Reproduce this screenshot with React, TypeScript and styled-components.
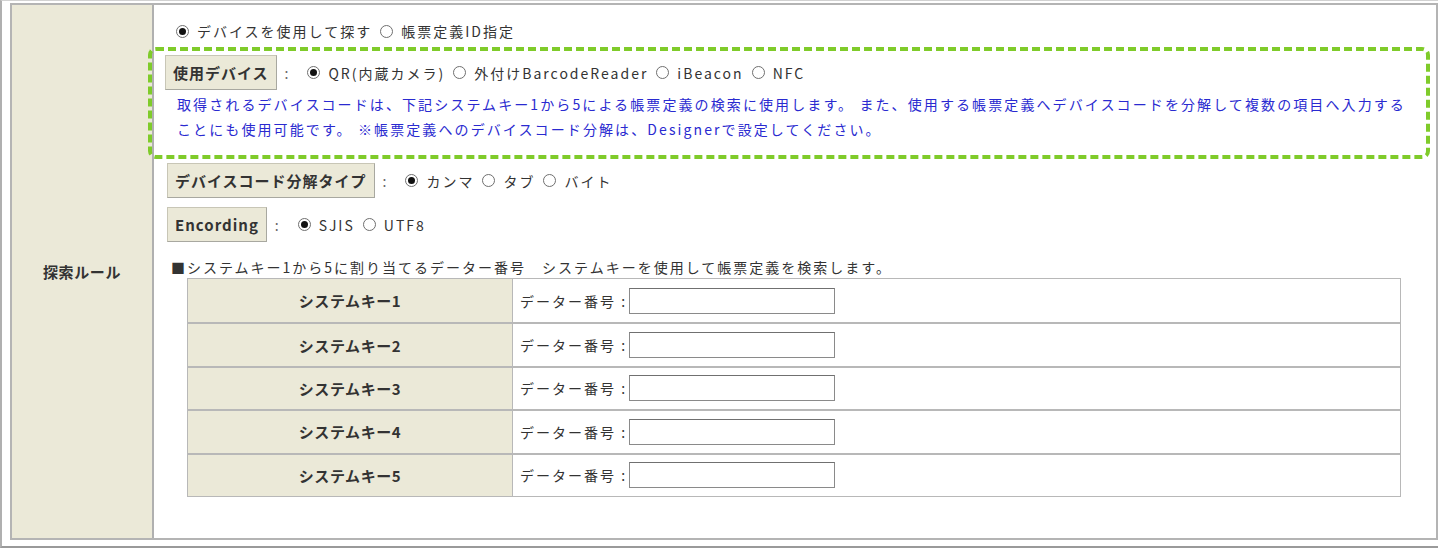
import React from "react";
import styled, { createGlobalStyle } from "styled-components";

const GlobalStyle = createGlobalStyle`
  html, body { margin: 0; padding: 0; background: #ffffff; }
  body { font-family: "Noto Sans CJK JP", "Noto Sans", sans-serif; color: #333333; }
  * { box-sizing: border-box; }
`;

const Frame = styled.div`
  width: 1438px;
  height: 548px;
  border-top: 1px solid #d2d2d2;
  border-left: 2px solid #b0b0b0;
  border-bottom: 2px solid #9a9a9a;
  padding: 2px 0 6px 8px;
  display: flex;
`;

const Table = styled.div`
  position: relative;
  flex: 1;
  display: grid;
  grid-template-columns: 142px 1fr;
  border: 2px solid #b4b4b4;
`;

const LabelCell = styled.div`
  background: #ebe9d8;
  border-right: 2px solid #b0b0b0;
  display: flex;
  align-items: center;
  justify-content: center;
  font-size: 15px;
  font-weight: 700;
  letter-spacing: 0.6px;
  color: #333;
`;

const Content = styled.div`
  display: flex;
  flex-direction: column;
  align-items: flex-start;
  padding: 16px 0 0 0;
  font-size: 14px;
  letter-spacing: 2px;
`;

const Line = styled.div<{ $indent: number; $top: number }>`
  display: flex;
  align-items: center;
  margin-left: ${(p) => p.$indent}px;
  margin-top: ${(p) => p.$top}px;
  height: 20px;
  white-space: nowrap;
`;

const OptionRow = styled.div<{ $indent: number; $top: number }>`
  display: flex;
  align-items: center;
  margin-left: ${(p) => p.$indent}px;
  margin-top: ${(p) => p.$top}px;
  white-space: nowrap;
`;

const FieldLabel = styled.div`
  height: 35px;
  padding: 0 7px;
  display: flex;
  align-items: center;
  background: #ebe9d8;
  border: 1px solid #c8c6b6;
  border-right-color: #a8a8a0;
  border-bottom-color: #a8a8a0;
  font-size: 15px;
  font-weight: 700;
  letter-spacing: 1px;
  color: #333;
`;

const Colon = styled.span`
  margin: 0 17px 0 8px;
  color: #666;
`;

const Option = styled.label`
  display: inline-flex;
  align-items: center;
  margin-right: 8px;
  color: #333;
`;

const Radio = styled.span<{ $checked?: boolean }>`
  width: 13px;
  height: 13px;
  border-radius: 50%;
  border: 1px solid #6f6f6f;
  background: #fff;
  margin-right: 8px;
  display: inline-flex;
  align-items: center;
  justify-content: center;
  flex: none;
  &::after {
    content: "";
    width: 7px;
    height: 7px;
    border-radius: 50%;
    background: ${(p) => (p.$checked ? "#111" : "transparent")};
  }
`;

const Note = styled.div`
  margin: 2px 0 0 23px;
  color: #2a2ad0;
  font-size: 14px;
  line-height: 25px;
  letter-spacing: 2.1px;
  white-space: nowrap;
`;

const Heading = styled.div`
  margin: 15px 0 0 17px;
  height: 20px;
  line-height: 20px;
  white-space: nowrap;
`;

const KeyTable = styled.div`
  margin: 1px 0 0 33px;
  width: 1214px;
  display: grid;
  grid-template-columns: 325px 1fr;
  border: 1px solid #b8b8b8;
`;

const KeyName = styled.div<{ $first: boolean }>`
  height: 43.4px;
  background: #ebe9d8;
  display: flex;
  align-items: center;
  justify-content: center;
  font-size: 15px;
  font-weight: 700;
  letter-spacing: 0.6px;
  color: #333;
  border-top: ${(p) => (p.$first ? "none" : "2px solid #b8b8b8")};
  border-right: 1px solid #b8b8b8;
`;

const KeyValue = styled.div<{ $first: boolean }>`
  height: 43.4px;
  display: flex;
  align-items: center;
  padding-left: 7px;
  border-top: ${(p) => (p.$first ? "none" : "2px solid #b8b8b8")};
`;

const TextBox = styled.input`
  width: 206px;
  height: 26px;
  margin-left: 2px;
  border: 1px solid #8a8a8a;
  border-top-color: #707070;
  background: #fff;
  font-size: 13px;
`;

const Highlight = styled.div`
  position: absolute;
  left: 136px;
  top: 42px;
  width: 1282px;
  height: 112px;
  border: 4px dashed #7fcb2a;
  border-radius: 8px;
  pointer-events: none;
`;

const keys = [1, 2, 3, 4, 5];

export default function App() {
  return (
    <>
      <GlobalStyle />
      <Frame>
        <Table>
          <LabelCell>探索ルール</LabelCell>
          <Content>
            <Line $indent={22} $top={0}>
              <Option><Radio $checked />デバイスを使用して探す</Option>
              <Option><Radio />帳票定義ID指定</Option>
            </Line>
            <OptionRow $indent={11} $top={14}>
              <FieldLabel>使用デバイス</FieldLabel>
              <Colon>:</Colon>
              <Option><Radio $checked />QR(内蔵カメラ)</Option>
              <Option><Radio />外付けBarcodeReader</Option>
              <Option><Radio />iBeacon</Option>
              <Option><Radio />NFC</Option>
            </OptionRow>
            <Note>
              取得されるデバイスコードは、下記システムキー1から5による帳票定義の検索に使用します。 また、使用する帳票定義へデバイスコードを分解して複数の項目へ入力する
              <br />
              ことにも使用可能です。 ※帳票定義へのデバイスコード分解は、Designerで設定してください。
            </Note>
            <OptionRow $indent={13} $top={21}>
              <FieldLabel>デバイスコード分解タイプ</FieldLabel>
              <Colon>:</Colon>
              <Option><Radio $checked />カンマ</Option>
              <Option><Radio />タブ</Option>
              <Option><Radio />バイト</Option>
            </OptionRow>
            <OptionRow $indent={13} $top={9}>
              <FieldLabel>Encording</FieldLabel>
              <Colon>:</Colon>
              <Option><Radio $checked />SJIS</Option>
              <Option><Radio />UTF8</Option>
            </OptionRow>
            <Heading>■システムキー1から5に割り当てるデーター番号　システムキーを使用して帳票定義を検索します。</Heading>
            <KeyTable>
              {keys.map((k, i) => (
                <React.Fragment key={k}>
                  <KeyName $first={i === 0}>システムキー{k}</KeyName>
                  <KeyValue $first={i === 0}>
                    データー番号 :
                    <TextBox type="text" />
                  </KeyValue>
                </React.Fragment>
              ))}
            </KeyTable>
          </Content>
          <Highlight />
        </Table>
      </Frame>
    </>
  );
}
